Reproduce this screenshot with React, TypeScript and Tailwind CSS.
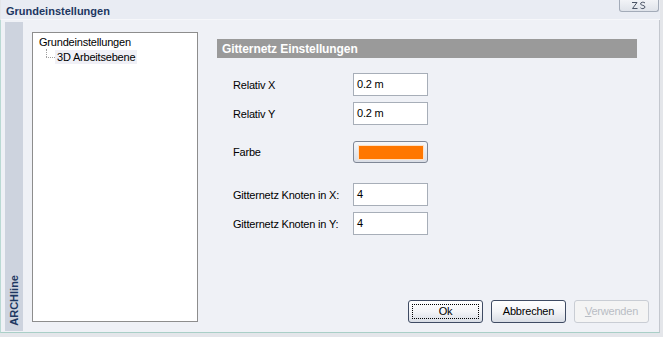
import React from 'react';

const font = { fontFamily: '"Liberation Sans", Arial, sans-serif' };

function Field({ label, value, className = '' }: { label: string; value: string; className?: string }) {
  return (
    <div className={`flex items-center h-[23px] ${className}`}>
      <span className="w-[136px] shrink-0 whitespace-nowrap pl-[16px] text-[11px] tracking-[-0.2px] text-black mt-[2px]">{label}</span>
      <div className="w-[75px] h-[23px] bg-white border border-[#a7aeb8] flex items-center pl-[3px] text-[11px] tracking-[-0.2px] text-black">
        {value}
      </div>
    </div>
  );
}

function DlgButton({ children, focused, disabled }: { children: React.ReactNode; focused?: boolean; disabled?: boolean }) {
  return (
    <button
      className={`relative w-[75px] h-[23px] rounded-[3px] border text-[11px] tracking-[-0.2px] flex items-center justify-center ${
        disabled
          ? 'border-[#c9cdd4] bg-[#f4f4f4] text-[#b9bdc4]'
          : 'border-[#3f4b63] bg-gradient-to-b from-[#ffffff] via-[#f3f4f7] to-[#d9dde5] text-black'
      }`}
    >
      {focused && <span className="absolute inset-[3px] border border-dotted border-black" />}
      {children}
    </button>
  );
}

export default function App() {
  return (
    <div className="w-[663px] h-[337px] bg-[#e4e6ea] flex flex-col overflow-hidden" style={font}>
      <div className="h-[20px] flex justify-between bg-[#e9ecf3] border-b border-[#f6f7fa] mr-[3px] ml-[1px]">
        <span className="pl-[5px] pt-[3px] text-[11px] font-bold text-[#1d3761]">Grundeinstellungen</span>
        <div className="w-[40px] h-[12px] mr-[1px] rounded-b-[3px] border border-t-0 border-[#a3abb8] bg-gradient-to-b from-[#f2f3f7] to-[#dfe3ea] flex items-end justify-center pb-[1px]">
          <svg width="18" height="9" viewBox="0 0 18 9" fill="none" stroke="#4b5466" strokeWidth="1">
            <path d="M2 1.5 L7 1.5 L2.5 7.5 L7.5 7.5" />
            <path d="M15 2 C14 0.8, 10.5 0.8, 10.5 3 C10.5 4.5, 15 4, 15 6 C15 8, 11 8, 10.5 6.8" />
          </svg>
        </div>
      </div>

      <div className="h-[313px] flex bg-[#eff1f6] border-l border-b border-r border-l-[#b9d9d3] border-b-[#a9cfc7] border-r-[#c3c7ce] mr-[3px] pl-[4px] pt-[2px] pb-[1px]">
        <div className="w-[18px] bg-[#cdd3de] flex flex-col justify-end items-center pb-[5px]">
          <span className="text-[11px] font-bold text-[#1d3761] [writing-mode:vertical-rl] rotate-180 leading-none">ARCHline</span>
        </div>

        <div className="ml-[9px] mt-[10px] w-[166px] h-[290px] bg-white border border-[#8d8d8d] pl-[6px] pt-[2px] text-[11px] tracking-[-0.2px] text-black">
          <div className="h-[14px] leading-[14px]">Grundeinstellungen</div>
          <div className="flex items-center h-[16px]">
            <div className="w-[16px] h-[16px] flex flex-col pl-[7px]">
              <div className="h-[8px] border-l border-dotted border-[#a0a0a0]" />
              <div className="w-[9px] border-t border-dotted border-[#a0a0a0]" />
            </div>
            <span className="bg-[#f0f0f6] px-[2px] h-[14px] leading-[14px]">3D Arbeitsebene</span>
          </div>
        </div>

        <div className="ml-[19px] w-[433px] flex flex-col pt-[17px] pb-[8px]">
          <div className="w-[420px] h-[19px] bg-[#9a9a9a] text-white font-bold text-[12px] tracking-[-0.1px] pl-[5px] flex items-center">
            Gitternetz Einstellungen
          </div>

          <Field className="mt-[15px]" label="Relativ X" value="0.2 m" />
          <Field className="mt-[6px]" label="Relativ Y" value="0.2 m" />

          <div className="flex items-center h-[22px] mt-[16px]">
            <span className="w-[136px] shrink-0 pl-[16px] text-[11px] tracking-[-0.2px] text-black">Farbe</span>
            <div className="w-[75px] h-[22px] rounded-[3px] border border-[#7f8796] bg-gradient-to-b from-[#f7f8fa] to-[#dadee6] flex items-center justify-center">
              <div className="w-[66px] h-[15px] bg-[#ff7700] border border-[#fde0c4]" />
            </div>
          </div>

          <Field className="mt-[20px]" label="Gitternetz Knoten in X:" value="4" />
          <Field className="mt-[6px]" label="Gitternetz Knoten in Y:" value="4" />

          <div className="mt-auto flex pl-[191px] gap-[8px]">
            <DlgButton focused>Ok</DlgButton>
            <DlgButton>Abbrechen</DlgButton>
            <DlgButton disabled>
              <span><span className="underline">V</span>erwenden</span>
            </DlgButton>
          </div>
        </div>
      </div>
    </div>
  );
}
